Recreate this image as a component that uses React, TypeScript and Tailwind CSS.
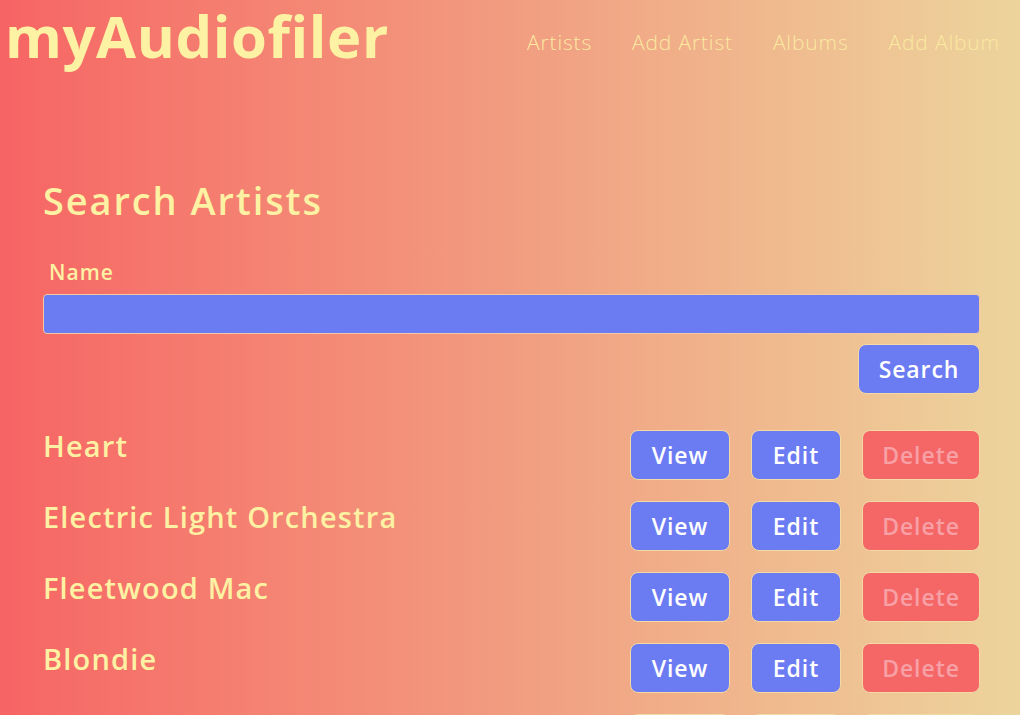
const artists = ["Heart", "Electric Light Orchestra", "Fleetwood Mac", "Blondie", "Queen"];

const font = { fontFamily: '"Open Sans", "Liberation Sans", sans-serif' };

const Button = ({ label, className }: { label: string; className: string }) => (
  <button
    className={`h-[50px] rounded-lg border border-[#f3d9a4] text-[23px] font-semibold tracking-[0.04em] ${className}`}
  >
    {label}
  </button>
);

const App = () => {
  return (
    <div
      style={font}
      className="h-[715px] w-full overflow-hidden bg-gradient-to-r from-[#f66464] via-[#f19c80] to-[#ecd49c] text-[#fdf1a3]"
    >
      <header className="flex items-start justify-between pl-[5px] pr-5">
        <h1 className="text-[58px] font-bold leading-[72px] tracking-[0.01em]">myAudiofiler</h1>
        <nav className="mt-[27px] flex gap-[40px] text-[21px] font-light tracking-[0.04em] text-[#fbe9a0]">
          <a>Artists</a>
          <a>Add Artist</a>
          <a>Albums</a>
          <a>Add Album</a>
        </nav>
      </header>

      <main className="px-[43px] pr-[40px] pt-[104px]">
        <h2 className="text-[38px] font-semibold leading-[48px] tracking-[0.05em]">Search Artists</h2>
        <label className="ml-[6px] mt-[34px] block text-[21px] font-semibold leading-[28px] tracking-[0.05em]">
          Name
        </label>
        <input className="mt-[8px] block h-[40px] w-full rounded border border-[#f3c9a4] bg-[#6b7bf2]" />
        <div className="mt-[10px] flex justify-end">
          <Button label="Search" className="w-[122px] bg-[#6b7bf2] text-white" />
        </div>

        <ul className="mt-[36px] flex flex-col gap-[21px]">
          {artists.map((name) => (
            <li key={name} className="flex items-start justify-between">
              <span className="text-[29px] font-semibold leading-[32px] tracking-[0.04em]">{name}</span>
              <div className="flex gap-[21px]">
                <Button label="View" className="w-[100px] bg-[#6b7bf2] text-white" />
                <Button label="Edit" className="w-[90px] bg-[#6b7bf2] text-white" />
                <Button label="Delete" className="w-[118px] bg-[#f56767] text-[#f7a0a6]" />
              </div>
            </li>
          ))}
        </ul>
      </main>
    </div>
  );
};

export default App;
